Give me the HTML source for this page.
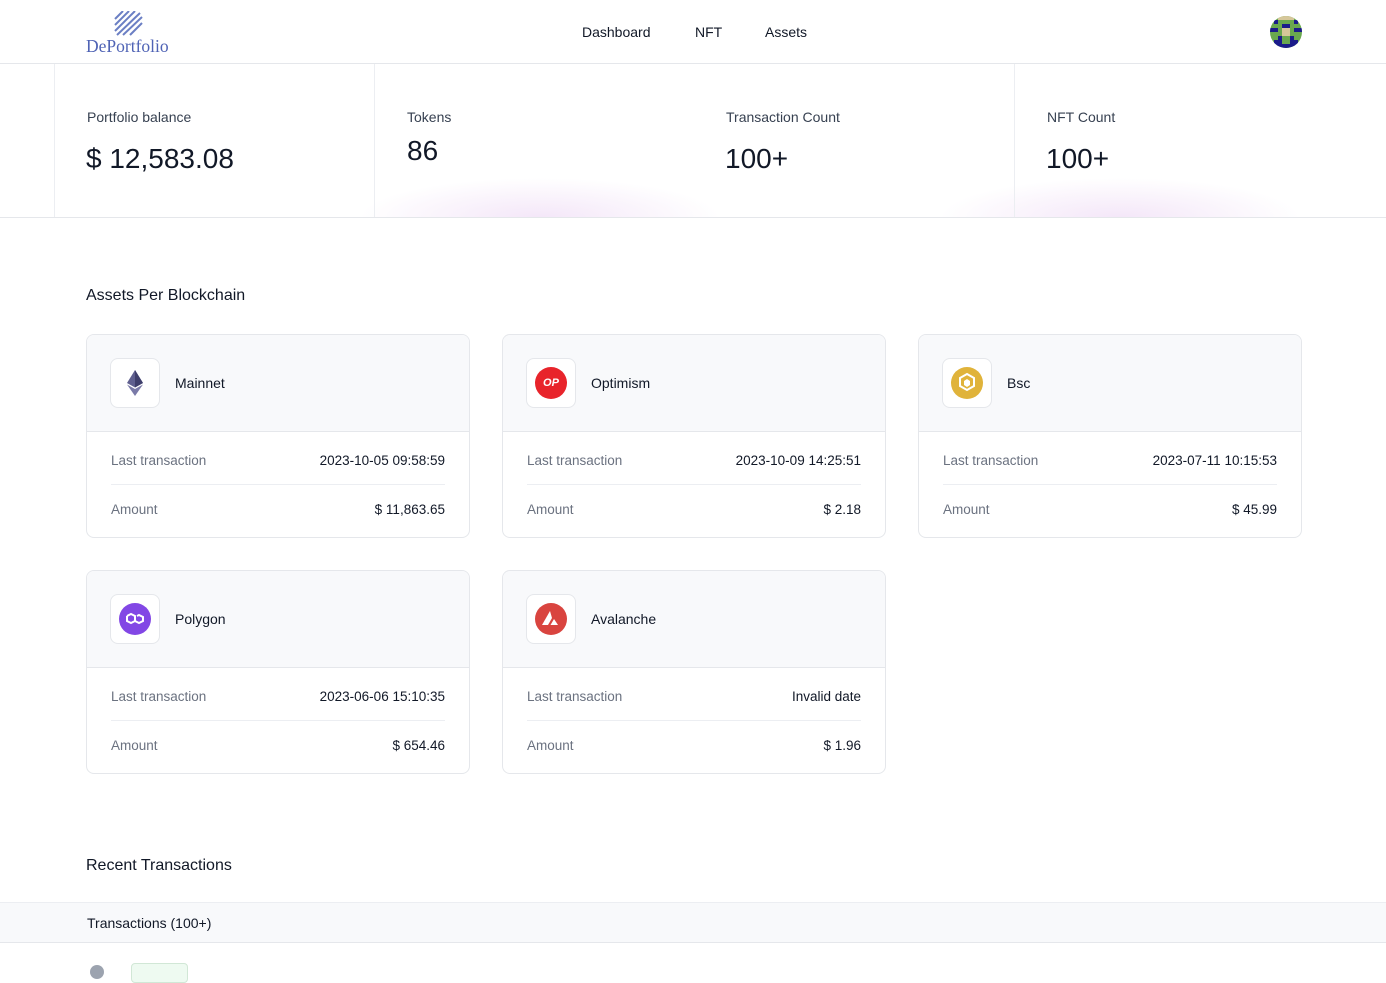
<!DOCTYPE html>
<html><head><meta charset="utf-8"><style>
*{box-sizing:border-box;margin:0;padding:0}
body{width:1386px;height:969px;overflow:hidden;background:#fff;font-family:"Liberation Sans",sans-serif;color:#111827;position:relative}
.hdr{height:64px;border-bottom:1px solid #e5e7eb;position:relative}
.nav{position:absolute;top:24px;font-size:14px;color:#111827}
.stats{position:absolute;top:64px;left:0;width:1386px;height:154px;border-bottom:1px solid #e5e7eb;background:radial-gradient(ellipse 180px 40px at 540px 154px,rgba(230,200,240,.45),transparent),radial-gradient(ellipse 180px 40px at 1120px 154px,rgba(230,200,240,.45),transparent)}
.vl{position:absolute;top:0;width:1px;height:153px;background:#eceef2}
.sl{position:absolute;top:45px;font-size:14px;color:#374151}
.sv{position:absolute;font-size:28px;color:#111827}
h2{position:absolute;font-size:16px;font-weight:normal;color:#111827}
.card{position:absolute;width:384px;height:204px;border:1px solid #e5e7eb;border-radius:8px;overflow:hidden}
.ch{height:97px;background:#f8f9fb;border-bottom:1px solid #e5e7eb;position:relative}
.ib{position:absolute;left:23px;top:23px;width:50px;height:50px;border:1px solid #e5e7eb;border-radius:8px;background:#fff;display:flex;align-items:center;justify-content:center}
.cn{position:absolute;left:88px;top:40px;font-size:14px}
.row{position:absolute;left:24px;right:24px;font-size:13.5px;display:flex;justify-content:space-between;color:#6b7280}
.row b{font-weight:normal;color:#111827}
.dv{position:absolute;left:24px;right:24px;top:149px;height:1px;background:#eceef2}
</style></head><body>
<div class="hdr">
 <svg style="position:absolute;left:113px;top:11px" width="30" height="26" viewBox="0 0 30 26"><g stroke="#6b7fc4" stroke-width="2"><line x1="2" y1="8" x2="10" y2="0"/><line x1="2" y1="14" x2="16" y2="0"/><line x1="2" y1="20" x2="22" y2="0"/><line x1="4" y1="24" x2="27" y2="2"/><line x1="10" y1="24" x2="29" y2="6"/><line x1="17" y1="24" x2="29" y2="12"/></g></svg>
 <div style="position:absolute;left:86px;top:36px;font-family:'Liberation Serif',serif;font-size:17.5px;color:#4f63b5">DePortfolio</div>
 <div class="nav" style="left:582px">Dashboard</div>
 <div class="nav" style="left:695px">NFT</div>
 <div class="nav" style="left:765px">Assets</div>
 <svg style="position:absolute;left:1270px;top:16px" width="32" height="32" viewBox="0 0 8 8"><defs><clipPath id="c"><circle cx="4" cy="4" r="4"/></clipPath></defs><g clip-path="url(#c)"><rect width="8" height="8" fill="#6aa84f"/><rect x="2" y="0" width="4" height="1" fill="#d6c79a"/><rect x="1" y="1" width="1" height="1" fill="#1b1b8a"/><rect x="6" y="1" width="1" height="1" fill="#1b1b8a"/><rect x="3" y="2" width="2" height="1" fill="#1b1b8a"/><rect x="0" y="3" width="2" height="1" fill="#1b1b8a"/><rect x="6" y="3" width="2" height="1" fill="#1b1b8a"/><rect x="3" y="3" width="2" height="2" fill="#d6c79a"/><rect x="2" y="5" width="1" height="1" fill="#1b1b8a"/><rect x="5" y="5" width="1" height="1" fill="#1b1b8a"/><rect x="1" y="6" width="6" height="2" fill="#1b1b8a"/><rect x="3" y="6" width="2" height="1" fill="#6aa84f"/></g></svg>
</div>
<div class="stats">
 <div class="vl" style="left:54px"></div><div class="vl" style="left:374px"></div><div class="vl" style="left:1014px"></div>
 <div class="sl" style="left:87px">Portfolio balance</div><div class="sv" style="left:86px;top:79px">$ 12,583.08</div>
 <div class="sl" style="left:407px">Tokens</div><div class="sv" style="left:407px;top:71px">86</div>
 <div class="sl" style="left:726px">Transaction Count</div><div class="sv" style="left:725px;top:79px">100+</div>
 <div class="sl" style="left:1047px">NFT Count</div><div class="sv" style="left:1046px;top:79px">100+</div>
</div>
<h2 style="left:86px;top:287px">Assets Per Blockchain</h2>

<div class="card" style="left:86px;top:334px"><div class="ch"><div class="ib"><svg width="18" height="26" viewBox="0 0 18 26"><path d="M9 0L1 13L9 17.5L17 13Z" fill="#5f5f8f"/><path d="M9 0L9 17.5L17 13Z" fill="#3e3e6b"/><path d="M1 14.5L9 26L17 14.5L9 19Z" fill="#7a7aa8"/></svg></div><div class="cn">Mainnet</div></div>
<div class="row" style="top:118px"><span>Last transaction</span><b>2023-10-05 09:58:59</b></div><div class="dv"></div><div class="row" style="top:167px"><span>Amount</span><b>$ 11,863.65</b></div></div>

<div class="card" style="left:502px;top:334px"><div class="ch"><div class="ib"><div style="width:32px;height:32px;border-radius:50%;background:#e8242b;color:#fff;font-size:11px;font-weight:bold;font-style:italic;display:flex;align-items:center;justify-content:center">OP</div></div><div class="cn">Optimism</div></div>
<div class="row" style="top:118px"><span>Last transaction</span><b>2023-10-09 14:25:51</b></div><div class="dv"></div><div class="row" style="top:167px"><span>Amount</span><b>$ 2.18</b></div></div>

<div class="card" style="left:918px;top:334px"><div class="ch"><div class="ib"><svg width="32" height="32" viewBox="0 0 32 32"><circle cx="16" cy="16" r="16" fill="#e0b33a"/><path d="M16 7l7 4v8l-7 4-7-4v-8z" fill="none" stroke="#fff" stroke-width="2"/><path d="M16 12l3 2v4l-3 2-3-2v-4z" fill="#fff"/></svg></div><div class="cn">Bsc</div></div>
<div class="row" style="top:118px"><span>Last transaction</span><b>2023-07-11 10:15:53</b></div><div class="dv"></div><div class="row" style="top:167px"><span>Amount</span><b>$ 45.99</b></div></div>

<div class="card" style="left:86px;top:570px"><div class="ch"><div class="ib"><svg width="32" height="32" viewBox="0 0 32 32"><circle cx="16" cy="16" r="16" fill="#8247e5"/><path d="M8 13l4-2 4 2v5l4 2 4-2v-4l-4-2-2 1M16 18l-4 2-4-2v-5" fill="none" stroke="#fff" stroke-width="2"/></svg></div><div class="cn">Polygon</div></div>
<div class="row" style="top:118px"><span>Last transaction</span><b>2023-06-06 15:10:35</b></div><div class="dv"></div><div class="row" style="top:167px"><span>Amount</span><b>$ 654.46</b></div></div>

<div class="card" style="left:502px;top:570px"><div class="ch"><div class="ib"><svg width="32" height="32" viewBox="0 0 32 32"><circle cx="16" cy="16" r="16" fill="#d9443f"/><path d="M15 8L7 22h6l4-7z" fill="#fff"/><path d="M19 16l-3.5 6H23z" fill="#fff"/></svg></div><div class="cn">Avalanche</div></div>
<div class="row" style="top:118px"><span>Last transaction</span><b>Invalid date</b></div><div class="dv"></div><div class="row" style="top:167px"><span>Amount</span><b>$ 1.96</b></div></div>

<h2 style="left:86px;top:857px">Recent Transactions</h2>
<div style="position:absolute;left:0;top:902px;width:1386px;height:41px;background:#f8f9fb;border-top:1px solid #eceef2;border-bottom:1px solid #e5e7eb"><div style="position:absolute;left:87px;top:12px;font-size:14px">Transactions (100+)</div></div>
<div style="position:absolute;left:90px;top:965px;width:14px;height:14px;border-radius:50%;background:#9ca3af"></div>
<div style="position:absolute;left:131px;top:963px;width:57px;height:20px;border:1px solid #d1e7d6;border-radius:4px;background:#eefaf1"></div>
</body></html>
